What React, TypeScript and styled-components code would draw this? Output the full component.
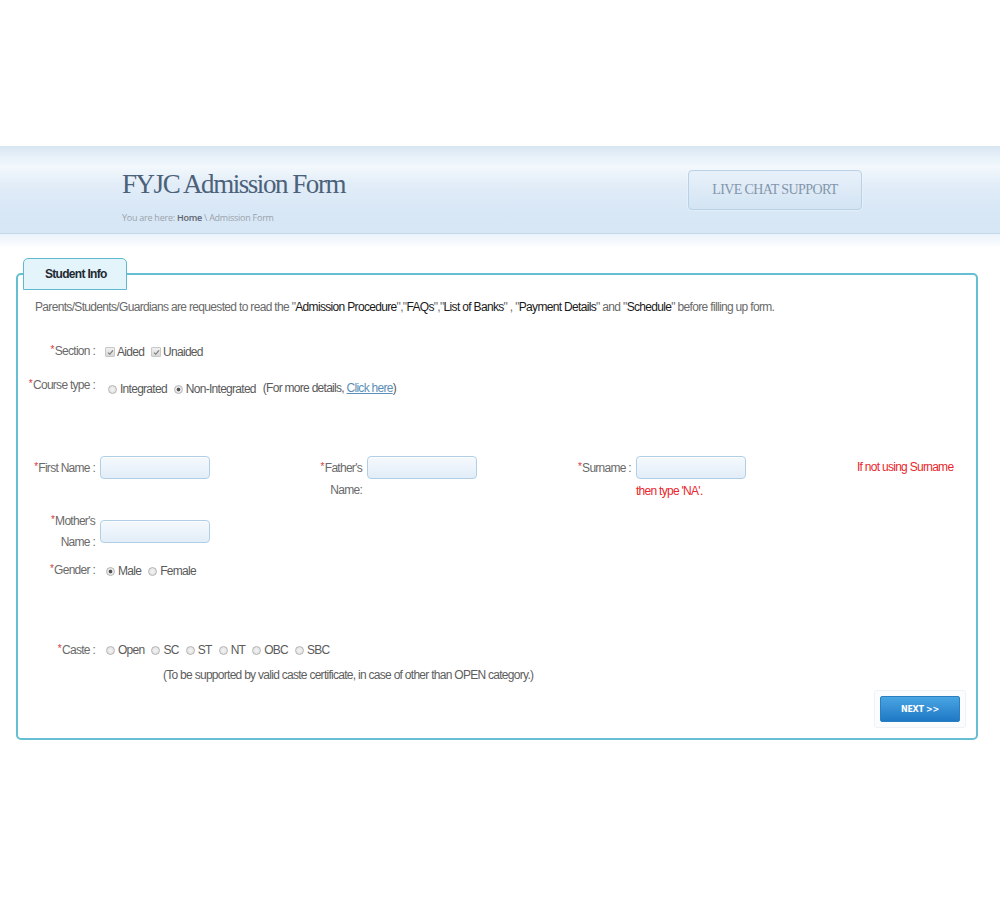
import React from "react";
import styled, { createGlobalStyle } from "styled-components";

const GlobalStyle = createGlobalStyle`
  body {
    margin: 0;
    background: #fff;
    font-family: "Liberation Sans", Arial, sans-serif;
  }
`;

const Page = styled.div`
  padding-top: 146px;
  padding-bottom: 40px;
`;

const HeaderBand = styled.div`
  height: 87px;
  background: linear-gradient(
    #d8e6f3 0%,
    #e9f2fa 14%,
    #f2f8fc 24%,
    #e2edf8 44%,
    #d9e8f6 70%,
    #d6e6f5 100%
  );
  border-bottom: 1px solid #c6d9ea;
  display: grid;
  grid-template-columns: 566px 174px;
  padding-left: 122px;
`;

const HeaderShade = styled.div`
  height: 12px;
  background: linear-gradient(#eaf2fa, #fbfdff);
`;

const TitleBlock = styled.div`
  padding-top: 23px;
`;

const Title = styled.h1`
  margin: 0;
  font-family: "Liberation Serif", "Times New Roman", serif;
  font-weight: normal;
  font-size: 27px;
  letter-spacing: -1.45px;
  line-height: 30px;
  color: #4b6179;
`;

const Breadcrumb = styled.div`
  margin-top: 13px;
  font-family: "Open Sans", sans-serif;
  font-size: 9px;
  line-height: 12px;
  letter-spacing: -0.25px;
  color: #9aa3ab;

  b {
    font-weight: 600;
    color: #5b6570;
  }
`;

const ChatButton = styled.div`
  margin-top: 24px;
  height: 38px;
  border: 1px solid #b9d1e6;
  border-radius: 4px;
  background: linear-gradient(#e8f1fa, #d3e4f3);
  box-shadow: 0 0 2px rgba(255, 255, 255, 0.9);
  display: flex;
  align-items: center;
  justify-content: center;
  font-family: "Liberation Serif", "Times New Roman", serif;
  font-size: 14px;
  letter-spacing: -0.6px;
  color: #8396ab;
`;

const Main = styled.div`
  padding: 12px 22px 0 16px;
`;

const Fieldset = styled.fieldset`
  margin: 0;
  padding: 0 0 10px;
  border: 2px solid #66bed3;
  border-radius: 5px;
  min-width: 0;
`;

const Legend = styled.legend`
  margin-left: 5px;
  padding: 0 19px 0 21px;
  height: 30px;
  line-height: 30px;
  border: 1px solid #5fb9cf;
  border-radius: 5px 5px 0 0;
  background: #e3f4fa;
  font-size: 12px;
  font-weight: bold;
  letter-spacing: -0.7px;
  color: #1f2a33;
`;

const Body = styled.div`
  font-size: 12px;
  letter-spacing: -0.72px;
  color: #6a6a6a;
`;

const Intro = styled.p`
  margin: 10px 0 0;
  padding-left: 17px;
  line-height: 14px;
  letter-spacing: -0.67px;

  b {
    font-weight: normal;
    color: #1a1a1a;
  }
`;

const Row = styled.div<{ $top: number; $gap: number }>`
  display: flex;
  align-items: flex-start;
  margin-top: ${(p) => p.$top}px;
  line-height: 20px;

  > :last-child {
    margin-left: ${(p) => p.$gap}px;
  }
`;

const Label = styled.span`
  width: 77px;
  flex: none;
  text-align: right;
  white-space: nowrap;
`;

const Star = styled.span`
  color: #d7383c;
  font-size: 10px;
  vertical-align: 2px;
  margin-right: 1px;
`;

const Options = styled.div<{ $drop: number }>`
  display: flex;
  align-items: center;
  gap: 7px;
  padding-top: ${(p) => p.$drop}px;
  color: #5a5a5a;
`;

const Choice = styled.label`
  display: flex;
  align-items: center;
  gap: 2px;
`;

const Radio = styled.span<{ $on?: boolean }>`
  width: 7px;
  height: 7px;
  margin-right: 1px;
  border-radius: 50%;
  border: 1px solid #b4b4b4;
  background: ${(p) =>
    p.$on
      ? "radial-gradient(circle, #555 0 1.6px, #e9e9e9 2.2px)"
      : "radial-gradient(circle, #f4f4f4, #dcdcdc)"};
  flex: none;
`;

const Check = styled.span`
  width: 8px;
  height: 8px;
  border: 1px solid #c8c8c8;
  border-radius: 1px;
  background: linear-gradient(#f0f0f0, #d8d8d8);
  display: flex;
  align-items: center;
  justify-content: center;
  flex: none;
`;

const MoreInfo = styled.span`
  margin-top: -3px;
`;

const Link = styled.a`
  color: #5b8fb6;
  text-decoration: underline;
`;

const NameGrid = styled.div`
  margin-top: 57px;
  display: grid;
  grid-template-columns: 77px 109px 148px 109px 150px 109px 1fr;
  column-gap: 5px;
  row-gap: 8px;
  line-height: 22px;
`;

const GridLabel = styled.span<{ $lh?: number }>`
  text-align: right;
  line-height: ${(p) => p.$lh ?? 22}px;
  align-self: ${(p) => (p.$lh ? "center" : "start")};
`;

const Field = styled.div`
  align-self: start;
`;

const MidField = styled.div`
  align-self: center;
`;

const TextInput = styled.input`
  display: block;
  box-sizing: border-box;
  width: 110px;
  height: 23px;
  margin: 0;
  border: 1px solid #b0cfe7;
  border-radius: 4px;
  background: linear-gradient(#f5f9fd, #e2edf8);
  box-shadow: inset 0 1px 1px rgba(255, 255, 255, 0.8);
  outline: none;
`;

const Warn = styled.div<{ $top?: number; $pad?: number }>`
  color: #e8262c;
  line-height: 14px;
  white-space: nowrap;
  margin-top: ${(p) => p.$top ?? 0}px;
  padding-left: ${(p) => p.$pad ?? 0}px;
`;

const Note = styled.div`
  margin-top: 8px;
  padding-left: 145px;
  line-height: 14px;
  color: #5e5e5e;
`;

const Actions = styled.div`
  margin-top: 8px;
  display: flex;
  justify-content: flex-end;
  padding-right: 10px;
`;

const ButtonFrame = styled.div`
  padding: 5px;
  border: 1px solid #eef2f6;
  border-radius: 3px;
  background: #fbfcfd;
`;

const NextButton = styled.button`
  width: 80px;
  height: 26px;
  border: 1px solid #2a7fc2;
  border-radius: 2px;
  background: linear-gradient(#4aa5e3, #1f78c5);
  color: #fff;
  font-family: "DejaVu Sans", sans-serif;
  font-size: 8px;
  font-weight: bold;
  letter-spacing: -0.3px;
  cursor: pointer;
`;

const Tick = () => (
  <svg width="7" height="7" viewBox="0 0 8 8">
    <path d="M1.2 4.2 L3.2 6 L6.8 1.6" fill="none" stroke="#7a7a7a" strokeWidth="1.3" />
  </svg>
);

const castes = ["Open", "SC", "ST", "NT", "OBC", "SBC"];

const App: React.FC = () => {
  return (
    <Page>
      <GlobalStyle />
      <HeaderBand>
        <TitleBlock>
          <Title>FYJC Admission Form</Title>
          <Breadcrumb>
            You are here: <b>Home</b> \ Admission Form
          </Breadcrumb>
        </TitleBlock>
        <ChatButton>LIVE CHAT SUPPORT</ChatButton>
      </HeaderBand>
      <HeaderShade />
      <Main>
        <Fieldset>
          <Legend>Student Info</Legend>
          <Body>
            <Intro>
              Parents/Students/Guardians are requested to read the "<b>Admission Procedure</b>","
              <b>FAQs</b>","<b>List of Banks</b>" , "<b>Payment Details</b>" and "<b>Schedule</b>"
              before filling up form.
            </Intro>

            <Row $top={26} $gap={10}>
              <Label>
                <Star>*</Star>Section :
              </Label>
              <Options $drop={2}>
                <Choice>
                  <Check>
                    <Tick />
                  </Check>
                  Aided
                </Choice>
                <Choice>
                  <Check>
                    <Tick />
                  </Check>
                  Unaided
                </Choice>
              </Options>
            </Row>

            <Row $top={12} $gap={13}>
              <Label>
                <Star>*</Star>Course type :
              </Label>
              <Options $drop={5}>
                <Choice>
                  <Radio />
                  Integrated
                </Choice>
                <Choice>
                  <Radio $on />
                  Non-Integrated
                </Choice>
                <MoreInfo>
                  (For more details, <Link href="#">Click here</Link>)
                </MoreInfo>
              </Options>
            </Row>

            <NameGrid>
              <GridLabel>
                <Star>*</Star>First Name :
              </GridLabel>
              <Field>
                <TextInput />
              </Field>
              <GridLabel>
                <Star>*</Star>Father's
                <br />
                Name:
              </GridLabel>
              <Field>
                <TextInput />
              </Field>
              <GridLabel>
                <Star>*</Star>Surname :
              </GridLabel>
              <Field>
                <TextInput />
                <Warn $top={5}>then type 'NA'.</Warn>
              </Field>
              <Warn $top={4} $pad={107}>
                If not using Surname
              </Warn>

              <GridLabel $lh={21}>
                <Star>*</Star>Mother's
                <br />
                Name :
              </GridLabel>
              <MidField>
                <TextInput />
              </MidField>
            </NameGrid>

            <Row $top={6} $gap={11}>
              <Label>
                <Star>*</Star>Gender :
              </Label>
              <Options $drop={2}>
                <Choice>
                  <Radio $on />
                  Male
                </Choice>
                <Choice>
                  <Radio />
                  Female
                </Choice>
              </Options>
            </Row>

            <Row $top={58} $gap={11}>
              <Label>
                <Star>*</Star>Caste :
              </Label>
              <Options $drop={1}>
                {castes.map((c) => (
                  <Choice key={c}>
                    <Radio />
                    {c}
                  </Choice>
                ))}
              </Options>
            </Row>

            <Note>(To be supported by valid caste certificate, in case of other than OPEN category.)</Note>

            <Actions>
              <ButtonFrame>
                <NextButton>NEXT &gt;&gt;</NextButton>
              </ButtonFrame>
            </Actions>
          </Body>
        </Fieldset>
      </Main>
    </Page>
  );
};

export default App;
